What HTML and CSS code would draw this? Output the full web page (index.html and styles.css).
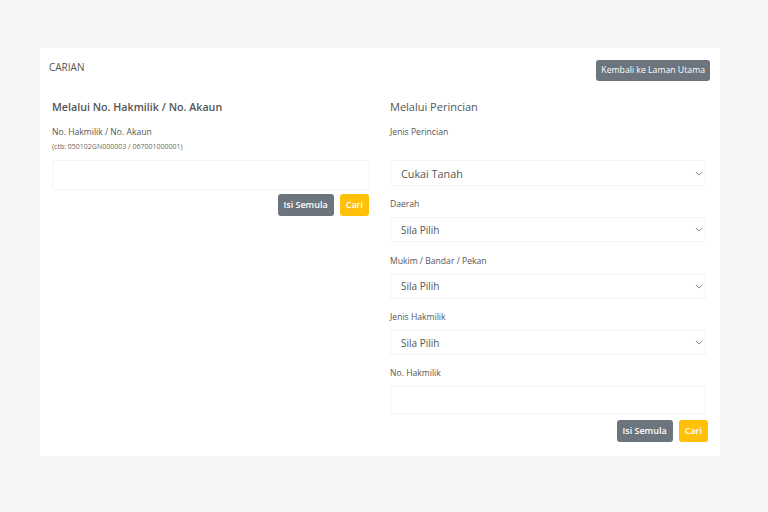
FILE: index.html
```html
<!DOCTYPE html>
<html lang="ms">
<head>
<meta charset="utf-8">
<title>Carian</title>
<link rel="stylesheet" href="styles.css">
</head>
<body>
<div class="page">
  <div class="card">
    <div class="card-head">
      <span class="card-title">CARIAN</span>
      <button class="btn btn-gray btn-back">Kembali ke Laman Utama</button>
    </div>
    <div class="cols">
      <div class="col">
        <h2 class="sec-title sec-bold">Melalui No. Hakmilik / No. Akaun</h2>
        <div class="label">No. Hakmilik / No. Akaun</div>
        <div class="hint">(ctb: 050102GN000003 / 067001000001)</div>
        <div class="input input-left"></div>
        <div class="actions actions-left">
          <button class="btn btn-gray">Isi Semula</button>
          <button class="btn btn-yellow">Cari</button>
        </div>
      </div>
      <div class="col">
        <h2 class="sec-title">Melalui Perincian</h2>
        <div class="label">Jenis Perincian</div>
        <div class="select select-first"><span class="select-text big">Cukai Tanah</span><svg class="chev" viewBox="0 0 10 6"><path d="M1 1l4 4 4-4" fill="none" stroke="#666" stroke-width="1"/></svg></div>
        <div class="label">Daerah</div>
        <div class="select"><span class="select-text">Sila Pilih</span><svg class="chev" viewBox="0 0 10 6"><path d="M1 1l4 4 4-4" fill="none" stroke="#666" stroke-width="1"/></svg></div>
        <div class="label">Mukim / Bandar / Pekan</div>
        <div class="select"><span class="select-text">Sila Pilih</span><svg class="chev" viewBox="0 0 10 6"><path d="M1 1l4 4 4-4" fill="none" stroke="#666" stroke-width="1"/></svg></div>
        <div class="label">Jenis Hakmilik</div>
        <div class="select select-last"><span class="select-text">Sila Pilih</span><svg class="chev" viewBox="0 0 10 6"><path d="M1 1l4 4 4-4" fill="none" stroke="#666" stroke-width="1"/></svg></div>
        <div class="label">No. Hakmilik</div>
        <div class="input input-right"></div>
        <div class="actions actions-right">
          <button class="btn btn-gray">Isi Semula</button>
          <button class="btn btn-yellow">Cari</button>
        </div>
      </div>
    </div>
  </div>
</div>
</body>
</html>
```

FILE: styles.css
```css
html, body {
  margin: 0;
  padding: 0;
  background: #f5f5f5;
  font-family: "Open Sans", "Noto Sans", sans-serif;
  color: #555;
}
.page {
  padding: 48px 48px 56px 40px;
}
.card {
  background: #fff;
  width: 680px;
  height: 408px;
  box-sizing: border-box;
  padding: 12px 10px 0 9px;
}
.card-head {
  display: flex;
  justify-content: space-between;
  align-items: flex-start;
  height: 39px;
}
.card-title {
  font-size: 10px;
  line-height: 14px;
  color: #555;
}
.btn {
  font-family: "Open Sans", "Noto Sans", sans-serif;
  border: none;
  border-radius: 3px;
  font-size: 9px;
  font-weight: 600;
  color: #fff;
  padding: 0 6px;
  height: 22px;
  line-height: 22px;
  cursor: pointer;
}
.btn-gray { background: #6c757d; }
.btn-yellow { background: #ffc107; }
.btn-back {
  font-weight: 400;
  font-size: 8.7px;
  height: 21px;
  line-height: 21px;
  padding: 0 5px;
}
.cols {
  display: grid;
  grid-template-columns: 318px 316px;
  column-gap: 20px;
  padding-left: 3px;
}
.sec-title {
  margin: 0;
  font-size: 11px;
  font-weight: 400;
  line-height: 16px;
  height: 27px;
  color: #555;
}
.sec-bold {
  font-weight: 600;
  font-size: 10.7px;
}
.label {
  font-size: 8.6px;
  line-height: 12px;
  color: #555;
}
.hint {
  font-size: 7px;
  line-height: 10px;
  margin-top: 4px;
  color: #666;
}
.input {
  border: 1px solid #f4f4f4;
  box-sizing: border-box;
  border-radius: 2px;
}
.input-left {
  margin-top: 8px;
  height: 30px;
}
.actions {
  display: flex;
  justify-content: flex-end;
  gap: 6px;
}
.actions-left { margin-top: 4px; margin-right: 1px; }
.actions-right { margin-top: 6px; margin-right: -2px; }
.select {
  display: flex;
  align-items: center;
  justify-content: space-between;
  border: 1px solid #f4f4f4;
  border-radius: 2px;
  box-sizing: border-box;
  height: 25px;
  padding: 0 2px 0 10px;
  margin-top: 7px;
  margin-bottom: 12.5px;
}
.select-first {
  margin-top: 22px;
  height: 26px;
  margin-bottom: 12px;
}
.select-last { margin-bottom: 11.5px; }
.select-text {
  font-size: 10px;
  color: #555;
}
.select-text.big { font-size: 10.8px; }
.chev {
  width: 8px;
  height: 5px;
}
.input-right {
  margin-top: 7px;
  height: 28px;
}
```
